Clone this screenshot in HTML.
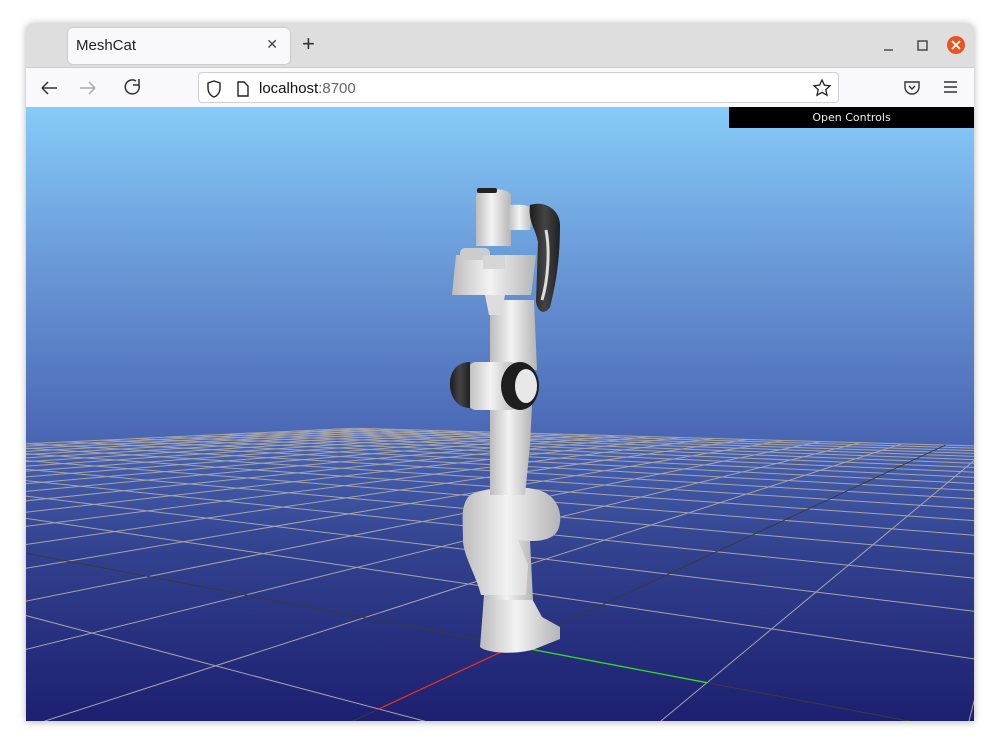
<!DOCTYPE html>
<html><head><meta charset="utf-8"><style>
*{margin:0;padding:0;box-sizing:border-box}
html,body{width:1000px;height:750px;overflow:hidden}
body{background:#fff;position:relative;font-family:"Liberation Sans","DejaVu Sans",sans-serif}
.win{position:absolute;left:26px;top:23px;width:948px;height:698px;border-radius:8px 8px 0 0;overflow:hidden;box-shadow:0 1px 8px rgba(0,0,0,.3);background:#ddd}
.tabbar{position:absolute;left:0;top:0;width:948px;height:44px;background:#dedede}
.tab{position:absolute;left:42px;top:5px;width:222px;height:36px;background:#f9f9fb;border-radius:5px;box-shadow:0 0 2px rgba(0,0,0,.2)}
.tab span{position:absolute;left:8px;top:9px;font-size:15px;color:#222}
.tab i{position:absolute;right:12px;top:8px;font-style:normal;font-size:14px;color:#444}
.plus{position:absolute;left:276px;top:8px;font-size:22px;color:#333}
.toolbar{position:absolute;left:0;top:44px;width:948px;height:40px;background:#f9f9fb;border-top:1px solid #ccc}
.url{position:absolute;left:172px;top:4px;width:641px;height:31px;background:#fff;border:1px solid #cfcfd4;border-radius:4px}
.url span{position:absolute;left:60px;top:7px;font-size:15px;color:#111}
.view{position:absolute;left:0;top:84px;width:948px;height:614px;overflow:hidden;background:linear-gradient(#86cbf8 0%,#6a9ad8 25%,#4c6ab7 52%,#32428f 72%,#1d1f70 100%)}
.oc{position:absolute;right:0;top:0;width:245px;height:21px;background:#000;color:#eee;font-size:11px;text-align:center;line-height:21px;font-family:"DejaVu Sans",sans-serif}
</style></head><body>
<div class="win">
 <div class="tabbar">
  <div class="tab"><span>MeshCat</span><i>✕</i></div>
  <div class="plus">+</div>
  <svg style="position:absolute;left:850px;top:12px" width="90" height="22">
   <line x1="8" y1="15" x2="17" y2="15" stroke="#333" stroke-width="1.3"/>
   <rect x="42" y="6" width="9" height="9" fill="none" stroke="#333" stroke-width="1.3"/>
   <circle cx="80" cy="10" r="9" fill="#e95420"/>
   <path d="M76 6l8 8M84 6l-8 8" stroke="#fff" stroke-width="1.8"/>
  </svg>
 </div>
 <div class="toolbar">
  <svg style="position:absolute;left:10px;top:8px" width="120" height="24">
   <path d="M6 12h15M6 12l6-6M6 12l6 6" stroke="#333" stroke-width="1.5" fill="none"/>
   <path d="M44 12h15M59 12l-6-6M59 12l-6 6" stroke="#aaa" stroke-width="1.5" fill="none"/>
   <path d="M103 9a7 7 0 1 1-3-4M103 3v6h-6" stroke="#333" stroke-width="1.5" fill="none"/>
  </svg>
  <div class="url">
   <svg style="position:absolute;left:6px;top:6px" width="50" height="20">
    <path d="M9 2l6 2v5c0 5-3 8-6 9c-3-1-6-4-6-9V4z" fill="none" stroke="#222" stroke-width="1.4"/>
    <path d="M33 3h6l4 4v10h-10z" fill="none" stroke="#222" stroke-width="1.4"/>
   </svg>
   <span>localhost<span style="position:static;color:#666">:8700</span></span>
   <svg style="position:absolute;right:6px;top:5px" width="20" height="20"><path d="M10 2l2.4 5.2 5.6.6-4.2 3.8 1.2 5.6L10 14.4 5 17.2l1.2-5.6L2 7.8l5.6-.6z" fill="none" stroke="#222" stroke-width="1.3"/></svg>
  </div>
  <svg style="position:absolute;left:876px;top:10px" width="60" height="20">
   <path d="M3 4h14v5a7 7 0 0 1-14 0z" fill="none" stroke="#333" stroke-width="1.4"/><path d="M7 8l3 3 3-3" fill="none" stroke="#333" stroke-width="1.4"/>
   <path d="M42 4h13M42 9h13M42 14h13" stroke="#333" stroke-width="1.4"/>
  </svg>
 </div>
 <div class="view">
  <svg id="g" width="948" height="614" style="position:absolute;left:0;top:0"></svg>
  <svg width="948" height="614" style="position:absolute;left:0;top:0">
   <defs>
    <linearGradient id="w" x1="0" x2="1"><stop offset="0" stop-color="#bcbcbc"/><stop offset=".45" stop-color="#f3f3f3"/><stop offset="1" stop-color="#b4b4b4"/></linearGradient>
    <linearGradient id="k" x1="0" x2="1"><stop offset="0" stop-color="#1c1c1c"/><stop offset=".5" stop-color="#444"/><stop offset="1" stop-color="#202020"/></linearGradient>
   </defs>
   <g transform="translate(-26,-107)">
    <line x1="514" y1="538" x2="514" y2="552" stroke="#3060ff" stroke-width="1.5"/>
    <path d="M484 595h46l12 22 18 10v12l-25 10c-15 5-40 5-52 0l-3-2z" fill="url(#w)"/>
    <path d="M487 540h43l3 60h-48z" fill="url(#w)"/>
    <path d="M470 495c15-8 50-10 68-5c20 5 26 25 20 40c-6 12-25 12-40 10l10 25l-2 30h-45c-5-20-18-40-18-55c0-20-3-35 7-45z" fill="url(#w)"/>
    <path d="M490 405h42l-2 40l-5 50h-35z" fill="url(#w)"/>
    <path d="M490 300h44l3 70h-47z" fill="url(#w)"/>
    <rect x="468" y="362" width="50" height="48" rx="8" fill="url(#w)"/>
    <path d="M470 362c-12 0-20 8-20 22s8 24 20 24z" fill="url(#k)"/>
    <ellipse cx="520" cy="386" rx="19" ry="24" fill="#1e1e1e"/>
    <ellipse cx="526" cy="386" rx="11" ry="17" fill="#e8e8e8"/>
    <path d="M476 196c0-8 35-10 35 0v50h-35z" fill="url(#w)"/>
    <path d="M508 205c10 0 20-2 25 5l-3 20h-22z" fill="url(#w)"/>
    <path d="M530 205c15-5 30 5 30 20c0 30-3 55-10 82c-5 8-12 6-14-5l2-60c-3-15-10-20-8-37z" fill="url(#k)"/>
    <path d="M546 230c4 20 2 50-4 70" stroke="#ddd" stroke-width="3" fill="none"/>
    <path d="M456 255h80l-5 40h-79z" fill="url(#w)"/>
    <rect x="460" y="248" width="30" height="12" rx="5" fill="#ccc"/>
    <rect x="483" y="255" width="22" height="14" fill="#d6d6d6"/>
    <path d="M485 295h20l-4 20h-12z" fill="#ddd"/>
    <rect x="477" y="188" width="20" height="5" rx="2" fill="#222"/>
   </g>
  </svg>
  <div class="oc">Open Controls</div>
 </div>
</div>
<script>
(function(){
var s=document.getElementById('g'),ns='http://www.w3.org/2000/svg';
var O=[514-26,646-107],R=[1053-26,395-107],G=[-807-26,395-107],a=-0.2006,b=-0.1275;
function P(u,v){var w=1+u*a+v*b;return [(O[0]+u*a*R[0]+v*b*G[0])/w,(O[1]+u*a*R[1]+v*b*G[1])/w];}
function ln(p,q,c,sw){var l=document.createElementNS(ns,'line');l.setAttribute('x1',p[0]);l.setAttribute('y1',p[1]);l.setAttribute('x2',q[0]);l.setAttribute('y2',q[1]);l.setAttribute('stroke',c);l.setAttribute('stroke-width',sw);s.appendChild(l);}
function seg(u1,v1,u2,v2,c,sw){var w1=1+u1*a+v1*b,w2=1+u2*a+v2*b,m=0.01;
 if(w1<m&&w2<m)return; if(w1<m){var t=(m-w1)/(w2-w1);u1+=t*(u2-u1);v1+=t*(v2-v1);} else if(w2<m){var t=(m-w1)/(w2-w1);u2=u1+t*(u2-u1);v2=v1+t*(v2-v1);}
 ln(P(u1,v1),P(u2,v2),c,sw);}
var N=20;
for(var i=-N;i<=N;i++){var c=i==0?'#3a3a3a':'#a6a4a8';seg(i,-N,i,N,c,1);seg(-N,i,N,i,c,1);}
seg(0,0,1,0,'#e83020',1.3);seg(0,0,0,1,'#30e020',1.3);
})();
</script>
</body></html>
